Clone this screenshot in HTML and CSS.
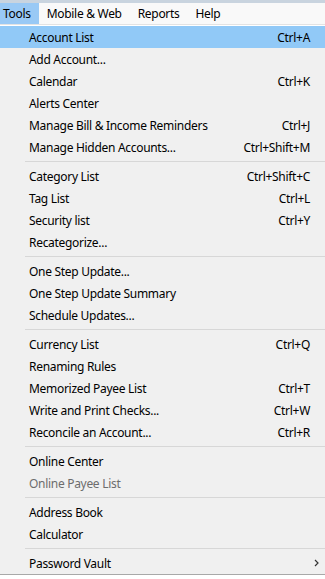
FILE: index.html
```html
<!DOCTYPE html>
<html>
  <head>
    <meta charset="UTF-8" />
    <meta name="viewport" content="width=device-width, initial-scale=1.0" />
    <title>Tools menu</title>
    <link rel="stylesheet" href="styles.css">
  </head>

  <body>
    <div class="topstrip"></div>

    <div class="menubar">
      <span class="bar-item active">Tools</span>
      <span class="bar-item">Mobile &amp; Web</span>
      <span class="bar-item">Reports</span>
      <span class="bar-item">Help</span>
    </div>

    <div class="menu">
      <div class="item hover"><span>Account List</span><span class="key">Ctrl+A</span></div>
      <div class="item"><span>Add Account...</span></div>
      <div class="item"><span>Calendar</span><span class="key">Ctrl+K</span></div>
      <div class="item"><span>Alerts Center</span></div>
      <div class="item"><span>Manage Bill &amp; Income Reminders</span><span class="key">Ctrl+J</span></div>
      <div class="item"><span>Manage Hidden Accounts...</span><span class="key">Ctrl+Shift+M</span></div>
      <div class="sep"></div>

      <div class="item"><span>Category List</span><span class="key">Ctrl+Shift+C</span></div>
      <div class="item"><span>Tag List</span><span class="key">Ctrl+L</span></div>
      <div class="item"><span>Security list</span><span class="key">Ctrl+Y</span></div>
      <div class="item"><span>Recategorize...</span></div>
      <div class="sep"></div>

      <div class="item"><span>One Step Update...</span></div>
      <div class="item"><span>One Step Update Summary</span></div>
      <div class="item"><span>Schedule Updates...</span></div>
      <div class="sep"></div>

      <div class="item"><span>Currency List</span><span class="key">Ctrl+Q</span></div>
      <div class="item"><span>Renaming Rules</span></div>
      <div class="item"><span>Memorized Payee List</span><span class="key">Ctrl+T</span></div>
      <div class="item"><span>Write and Print Checks...</span><span class="key">Ctrl+W</span></div>
      <div class="item"><span>Reconcile an Account...</span><span class="key">Ctrl+R</span></div>
      <div class="sep"></div>

      <div class="item"><span>Online Center</span></div>
      <div class="item disabled"><span>Online Payee List</span></div>
      <div class="sep"></div>

      <div class="item"><span>Address Book</span></div>
      <div class="item"><span>Calculator</span></div>
      <div class="sep"></div>

      <div class="item">
        <span>Password Vault</span>
        <svg class="arrow" width="5" height="8" viewBox="0 0 5 8">
          <path d="M1 1 L4 4 L1 7" fill="none" stroke="#333" stroke-width="1.2" />
        </svg>
      </div>
    </div>
  </body>
</html>
```

FILE: styles.css
```css
* {
  padding: 0px;
  margin: 0px;
  box-sizing: border-box;
}

body {
  --menu-bg: #f0f0f0;
  --hl: #91c9f7;
  --sep: #d7d7d7;
  width: 325px;
  height: 579px;
  overflow: hidden;
  background: #ffffff;
  font-family: "Noto Sans", "Open Sans", sans-serif;
  font-size: 12px;
  letter-spacing: -0.3px;
  color: #000000;
}

.topstrip {
  height: 3px;
  background: #c9d4df;
}

.menubar {
  height: 22px;
  display: flex;
  align-items: stretch;
  background: #f9f9f9;
  border-bottom: 1px solid #e3e3e3;
}

.bar-item {
  padding: 0px 8px;
  line-height: 21px;
}

.bar-item.active {
  margin-left: -5px;
  background: #99c9f5;
}

.menu {
  margin-top: 1px;
  background: var(--menu-bg);
  border-bottom: 1px solid #a8a8a8;
  height: 549px;
}

.item {
  height: 22px;
  display: flex;
  align-items: center;
  justify-content: space-between;
  padding: 0px 15px 0px 29px;
}

.item.hover {
  background: var(--hl);
}

.item.disabled {
  color: #6d6d6d;
}

.item .arrow {
  margin-right: -9px;
}

.sep {
  height: 7px;
  margin-left: 25px;
  padding-top: 3px;
}

.sep::after {
  content: "";
  display: block;
  height: 1px;
  background: var(--sep);
}
```
